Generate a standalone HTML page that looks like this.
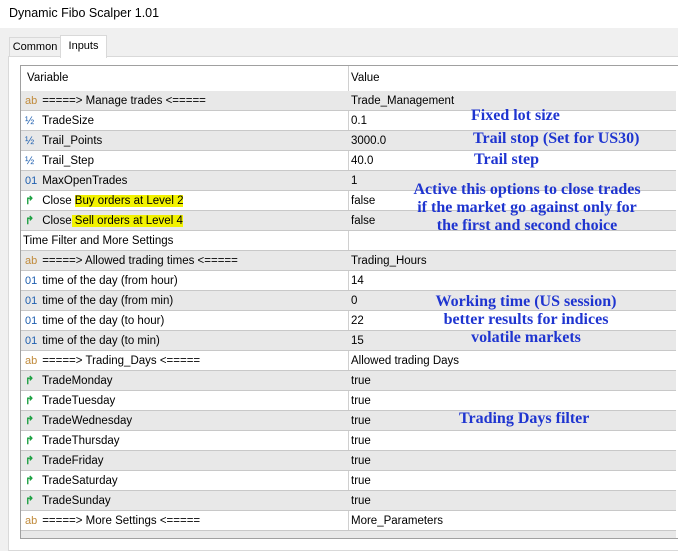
<!DOCTYPE html><html><head><style>
body{margin:0;width:678px;height:551px;background:#f0f0f0;font-family:"Liberation Sans",sans-serif;font-size:11.5px;color:#000;position:relative;overflow:hidden}
.a{position:absolute}
.title{left:0;top:0;width:678px;height:28px;background:#fff;font-size:12.5px;line-height:27px;text-indent:9px}
.tab{border:1px solid #d9d9d9;border-bottom:none;text-align:center;font-size:11px}
.panel{left:8px;top:56px;width:680px;height:493px;background:#fff;border:1px solid #d9d9d9}
.tbl{left:20px;top:65px;width:660px;height:472px;border:1px solid #a0a0a0;background:#fff;overflow:hidden}
.r{position:absolute;left:0;width:655px;height:19px;border-bottom:1px solid #c8c8c8;line-height:21px}
.g{background:#e8e8e8}
.c1{position:absolute;left:4px}
.c2{position:absolute;left:330px}
.sep{position:absolute;left:327px;top:0;width:1px;height:480px;background:#d0d0d0}
.ic{display:inline-block;width:14px;font-size:11px}
.ab{color:#c08a3a}.bl{color:#2060b0}.gr{color:#1aa040;font-weight:bold}
.hl{background:#f2f200}
.n{position:absolute;color:#1f35d0;font-family:"Liberation Serif",serif;font-weight:bold;font-size:16px;text-align:center;white-space:nowrap}
</style></head><body>
<div class="a title">Dynamic Fibo Scalper 1.01</div>
<div class="a tab" style="left:9px;top:37px;width:50px;height:19px;line-height:19px;background:#f0f0f0">Common</div>
<div class="a panel"></div>
<div class="a tab" style="left:60px;top:35px;width:45px;height:22px;line-height:20px;background:#fff;z-index:2">Inputs</div>
<div class="a tbl">
<div class="r" style="top:0;height:25px;line-height:25px;border-bottom:none"><span class="c1" style="left:6px">Variable</span><span class="c2">Value</span></div>
<div class="sep"></div>
<div class="r g" style="top:25px"><span class="c1"><span class="ic ab">ab</span> =====&gt; Manage trades &lt;=====</span><span class="c2">Trade_Management</span></div>
<div class="r" style="top:45px"><span class="c1"><span class="ic bl">½</span> TradeSize</span><span class="c2">0.1</span></div>
<div class="r g" style="top:65px"><span class="c1"><span class="ic bl">½</span> Trail_Points</span><span class="c2">3000.0</span></div>
<div class="r" style="top:85px"><span class="c1"><span class="ic bl">½</span> Trail_Step</span><span class="c2">40.0</span></div>
<div class="r g" style="top:105px"><span class="c1"><span class="ic bl">01</span> MaxOpenTrades</span><span class="c2">1</span></div>
<div class="r" style="top:125px"><span class="c1"><span class="ic gr">↱</span> Close <span class="hl">Buy orders at Level 2 </span></span><span class="c2">false</span></div>
<div class="r g" style="top:145px"><span class="c1"><span class="ic gr">↱</span> Close<span class="hl"> Sell orders at Level 4 </span></span><span class="c2">false</span></div>
<div class="r" style="top:165px"><span class="c1" style="left:2px">Time Filter and More Settings</span></div>
<div class="r g" style="top:185px"><span class="c1"><span class="ic ab">ab</span> =====&gt; Allowed trading times &lt;=====</span><span class="c2">Trading_Hours</span></div>
<div class="r" style="top:205px"><span class="c1"><span class="ic bl">01</span> time of the day (from hour)</span><span class="c2">14</span></div>
<div class="r g" style="top:225px"><span class="c1"><span class="ic bl">01</span> time of the day (from min)</span><span class="c2">0</span></div>
<div class="r" style="top:245px"><span class="c1"><span class="ic bl">01</span> time of the day (to hour)</span><span class="c2">22</span></div>
<div class="r g" style="top:265px"><span class="c1"><span class="ic bl">01</span> time of the day (to min)</span><span class="c2">15</span></div>
<div class="r" style="top:285px"><span class="c1"><span class="ic ab">ab</span> =====&gt; Trading_Days &lt;=====</span><span class="c2">Allowed trading Days</span></div>
<div class="r g" style="top:305px"><span class="c1"><span class="ic gr">↱</span> TradeMonday</span><span class="c2">true</span></div>
<div class="r" style="top:325px"><span class="c1"><span class="ic gr">↱</span> TradeTuesday</span><span class="c2">true</span></div>
<div class="r g" style="top:345px"><span class="c1"><span class="ic gr">↱</span> TradeWednesday</span><span class="c2">true</span></div>
<div class="r" style="top:365px"><span class="c1"><span class="ic gr">↱</span> TradeThursday</span><span class="c2">true</span></div>
<div class="r g" style="top:385px"><span class="c1"><span class="ic gr">↱</span> TradeFriday</span><span class="c2">true</span></div>
<div class="r" style="top:405px"><span class="c1"><span class="ic gr">↱</span> TradeSaturday</span><span class="c2">true</span></div>
<div class="r g" style="top:425px"><span class="c1"><span class="ic gr">↱</span> TradeSunday</span><span class="c2">true</span></div>
<div class="r" style="top:445px"><span class="c1"><span class="ic ab">ab</span> =====&gt; More Settings &lt;=====</span><span class="c2">More_Parameters</span></div>
<div class="r g" style="top:465px"></div>
</div>
<div class="n" style="left:471px;top:107px">Fixed lot size</div>
<div class="n" style="left:473px;top:130px">Trail stop (Set for US30)</div>
<div class="n" style="left:474px;top:151px">Trail step</div>
<div class="n" style="left:397px;top:181px;width:260px;line-height:18px">Active this options to close trades<br>if the market go against only for<br>the first and second choice</div>
<div class="n" style="left:397px;top:293px;width:258px;line-height:18px">Working time (US session)<br>better results for indices<br>volatile markets</div>
<div class="n" style="left:459px;top:410px">Trading Days filter</div>
</body></html>
